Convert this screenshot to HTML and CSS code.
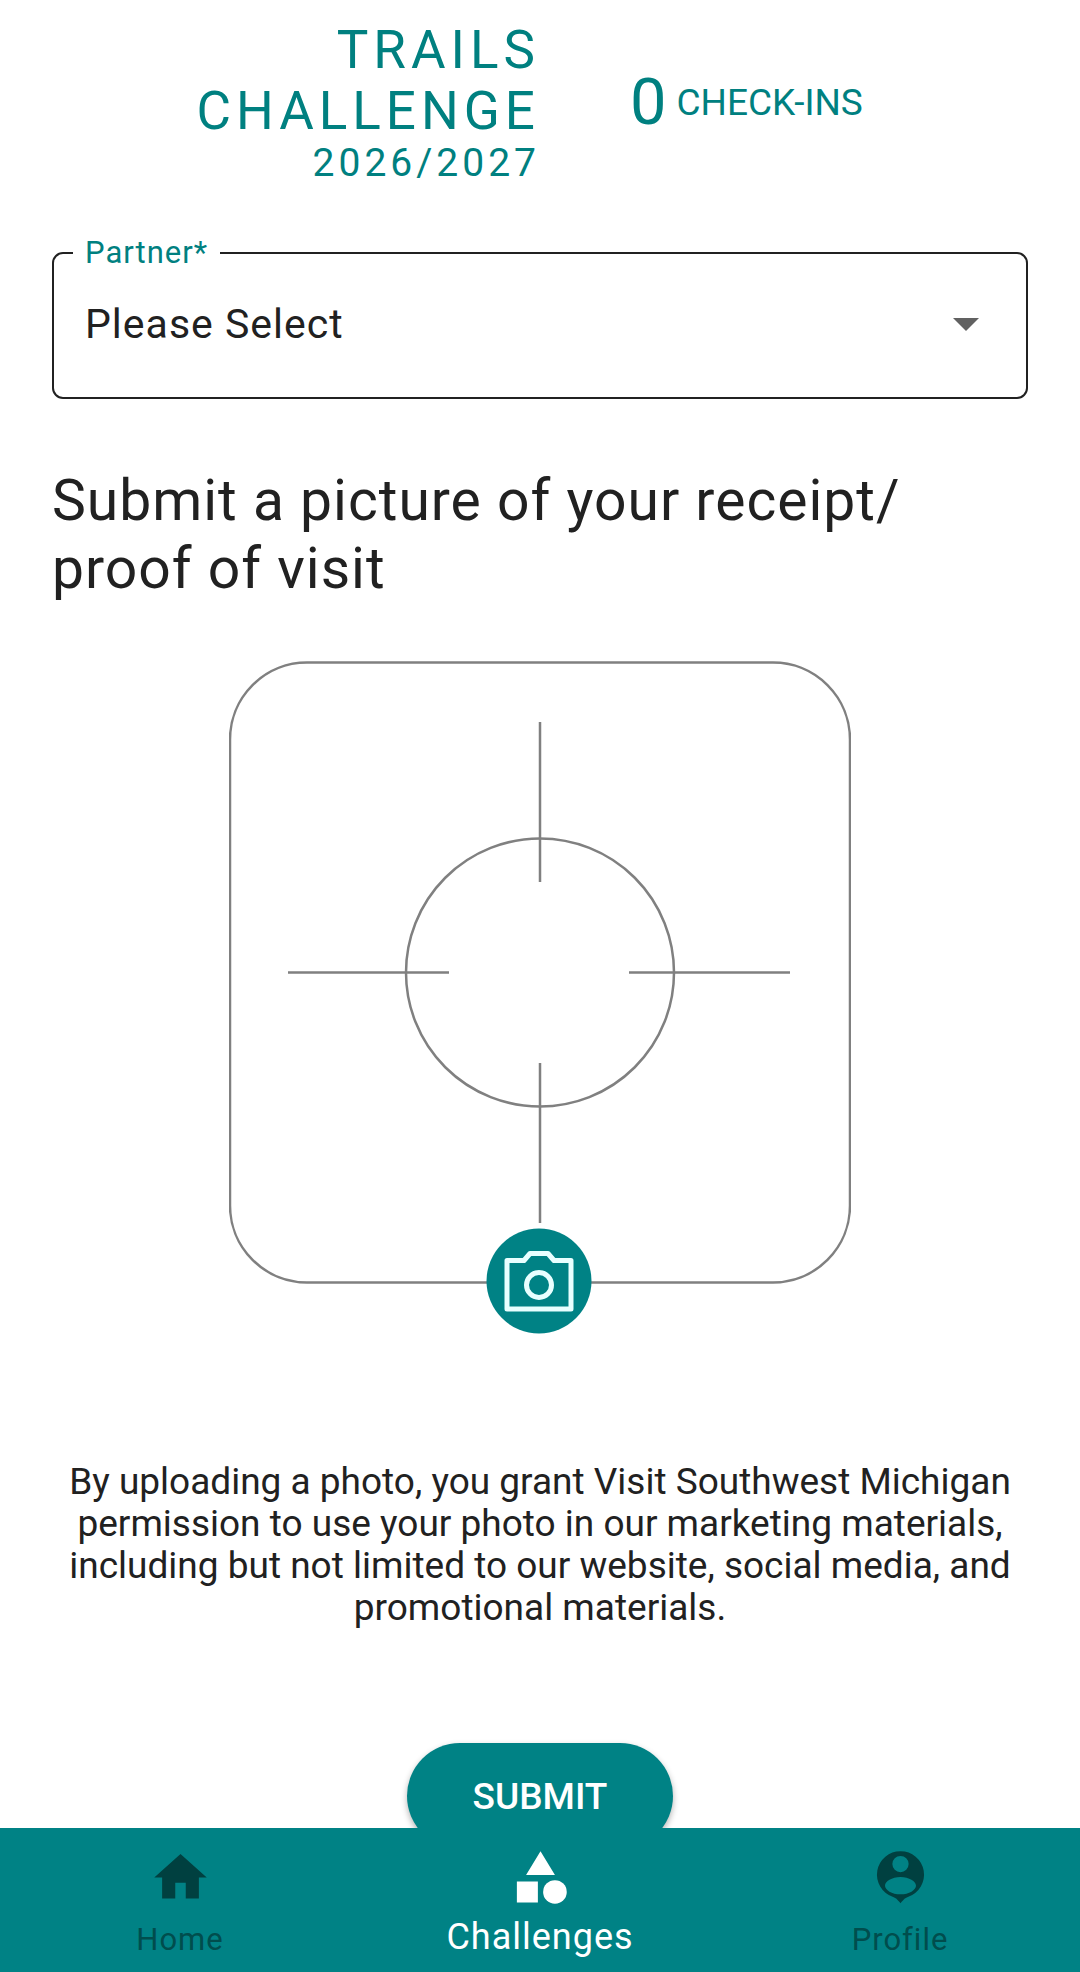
FILE: index.html
```html
<!DOCTYPE html>
<html lang="en">
  <head>
    <meta charset="UTF-8" />
    <meta name="viewport" content="width=device-width, initial-scale=1.0" />
    <title>Trails Challenge</title>
    <link rel="stylesheet" href="styles.css">
  </head>
  <body>
    <main class="content">
      <header class="challenge-header">
        <h1 class="challenge-title">
          TRAILS<br />CHALLENGE
          <span class="challenge-years">2026/2027</span>
        </h1>
        <p class="checkins">
          <span class="checkins-count">0</span>
          <span>CHECK-INS</span>
        </p>
      </header>

      <form class="checkin-form">
        <fieldset class="field">
          <legend><label for="partner">Partner*</label></legend>
          <div class="select-wrap">
            <select id="partner" required>
              <option value="">Please Select</option>
            </select>
            <svg class="arrow" viewBox="0 0 26 13" aria-hidden="true">
              <path d="M0 0h26L13 13z" />
            </svg>
          </div>
        </fieldset>

        <h2>Submit a picture of your receipt/<br />proof of visit</h2>

        <button type="button" class="photo-button" aria-label="Add a photo">
          <svg class="viewfinder" viewBox="0 0 622 673" aria-hidden="true">
            <g class="guides">
              <rect x="1" y="1.5" width="620" height="620" rx="77" />
              <circle cx="311" cy="311.5" r="134" />
              <path d="M311 61v160M311 402v160M59 311.5h161M400 311.5h161" />
            </g>
            <!-- camera badge -->
            <circle class="badge" cx="310" cy="620" r="52.5" />
            <g class="camera">
              <path d="M278 599.500h17l6-7h18l6 7h17V648h-64z" />
              <circle cx="310" cy="624" r="12.5" />
            </g>
          </svg>
        </button>

        <p class="permission">
          By uploading a photo, you grant Visit Southwest Michigan permission to
          use your photo in our marketing materials, including but not limited
          to our website, social media, and promotional materials.
        </p>

        <button type="submit" class="submit-button">SUBMIT</button>
      </form>
    </main>

    <nav class="tabs">
      <a href="#home" class="tab">
        <svg viewBox="0 0 24 24" aria-hidden="true">
          <path d="M10 20v-6h4v6h5v-8h3L12 3 2 12h3v8z" />
        </svg>
        <span>Home</span>
      </a>
      <a href="#challenges" class="tab active" aria-current="page">
        <svg viewBox="0 0 24 24" aria-hidden="true">
          <path d="M12 2l-5.5 9h11zM3 13.5h8v8H3z" />
          <circle cx="17.5" cy="17.5" r="4.5" />
        </svg>
        <span>Challenges</span>
      </a>
      <a href="#profile" class="tab">
        <svg viewBox="0 0 24 24" aria-hidden="true">
          <path
            fill-rule="evenodd"
            d="M12 2a8.9 8.9 0 0 0-3 17.3c1.2.4 1.7.9 3 2.5 1.3-1.6 1.8-2.1 3-2.5A8.9 8.9 0 0 0 12 2zM12 3.8a3.1 3.1 0 1 1 0 6.2 3.1 3.1 0 0 1 0-6.2zM12 11.8c3.3 0 5.9 1.7 5.9 3.3s-2.6 3.3-5.9 3.3-5.9-1.700-5.900-3.300 2.600-3.300 5.900-3.300z"
          />
        </svg>
        <span>Profile</span>
      </a>
    </nav>
  </body>
</html>
```
FILE: styles.css
```css
* {
  box-sizing: border-box;
}
body {
  display: flex;
  flex-direction: column;
  height: 100vh;
  margin: 0;
  font-family: Roboto, sans-serif;
  color: #212121;
  background: #fff;
}
.content {
  flex: 1;
  min-height: 0;
  padding: 20px 52px 0;
  overflow-y: auto;
  scrollbar-width: none;
}
.challenge-header {
  display: grid;
  grid-template-columns: 1fr 1fr;
  align-items: center;
  margin-bottom: 51px;
  color: #008080;
}
.challenge-title {
  margin: 0;
  font-size: 53px;
  font-weight: 400;
  line-height: 61px;
  letter-spacing: 5px;
  text-align: right;
}
.challenge-years {
  display: block;
  font-size: 39px;
  line-height: 42px;
  letter-spacing: 4px;
}
.checkins {
  display: flex;
  align-items: center;
  gap: 10px;
  margin: 0;
  padding-left: 90px;
  font-size: 37px;
}
.checkins-count {
  font-size: 65px;
}
.checkin-form {
  display: flex;
  flex-direction: column;
  align-items: center;
}
.field {
  width: 100%;
  margin: 0;
  padding: 0 19px 20px;
  border: 2px solid #212121;
  border-radius: 11px;
}
.field legend {
  padding: 0 12px;
  font-size: 31px;
  line-height: 36px;
  letter-spacing: 1px;
  color: #008080;
}
.select-wrap {
  display: grid;
  align-items: center;
}
.select-wrap select,
.arrow {
  grid-area: 1 / 1;
}
.select-wrap select {
  width: 100%;
  height: 106px;
  padding: 0 12px;
  border: 0;
  appearance: none;
  font-family: inherit;
  font-size: 41px;
  letter-spacing: 1px;
  color: inherit;
  background: transparent;
}
.arrow {
  justify-self: end;
  width: 26px;
  margin-right: 28px;
  fill: #616161;
  pointer-events: none;
}
h2 {
  width: 100%;
  margin: 68px 0 58px;
  font-size: 57px;
  font-weight: 400;
  line-height: 68px;
  letter-spacing: 1px;
}
.photo-button {
  display: block;
  width: 622px;
  max-width: 100%;
  padding: 0;
  border: 0;
  background: none;
}
.viewfinder {
  display: block;
  width: 100%;
}
.guides {
  fill: none;
  stroke: #808080;
  stroke-width: 2.5;
}
.badge {
  fill: #008285;
}
.camera {
  fill: none;
  stroke: #e8ffff;
  stroke-width: 5;
  stroke-linejoin: round;
}
.permission {
  margin: 127px 0 114px;
  font-size: 37px;
  line-height: 42px;
  text-align: center;
}
.submit-button {
  flex-shrink: 0;
  height: 106px;
  padding: 0 66px;
  border: 0;
  border-radius: 53px;
  font-family: inherit;
  font-size: 37px;
  font-weight: 500;
  color: #fff;
  background: #008285;
  box-shadow: 0 3px 6px rgba(0, 0, 0, 0.3);
}
.tabs {
  display: grid;
  grid-template-columns: repeat(3, 1fr);
  padding: 18px 0 1px;
  background: #008285;
}
.tab {
  display: flex;
  flex-direction: column;
  align-items: center;
  font-size: 31px;
  line-height: 62px;
  letter-spacing: 1px;
  color: #004d4d;
  text-decoration: none;
}
.tab svg {
  width: 63px;
  height: 63px;
  fill: #004040;
}
.tab.active {
  font-size: 36px;
  line-height: 57px;
  color: #fff;
}
.tab.active svg {
  fill: #fff;
}
```
